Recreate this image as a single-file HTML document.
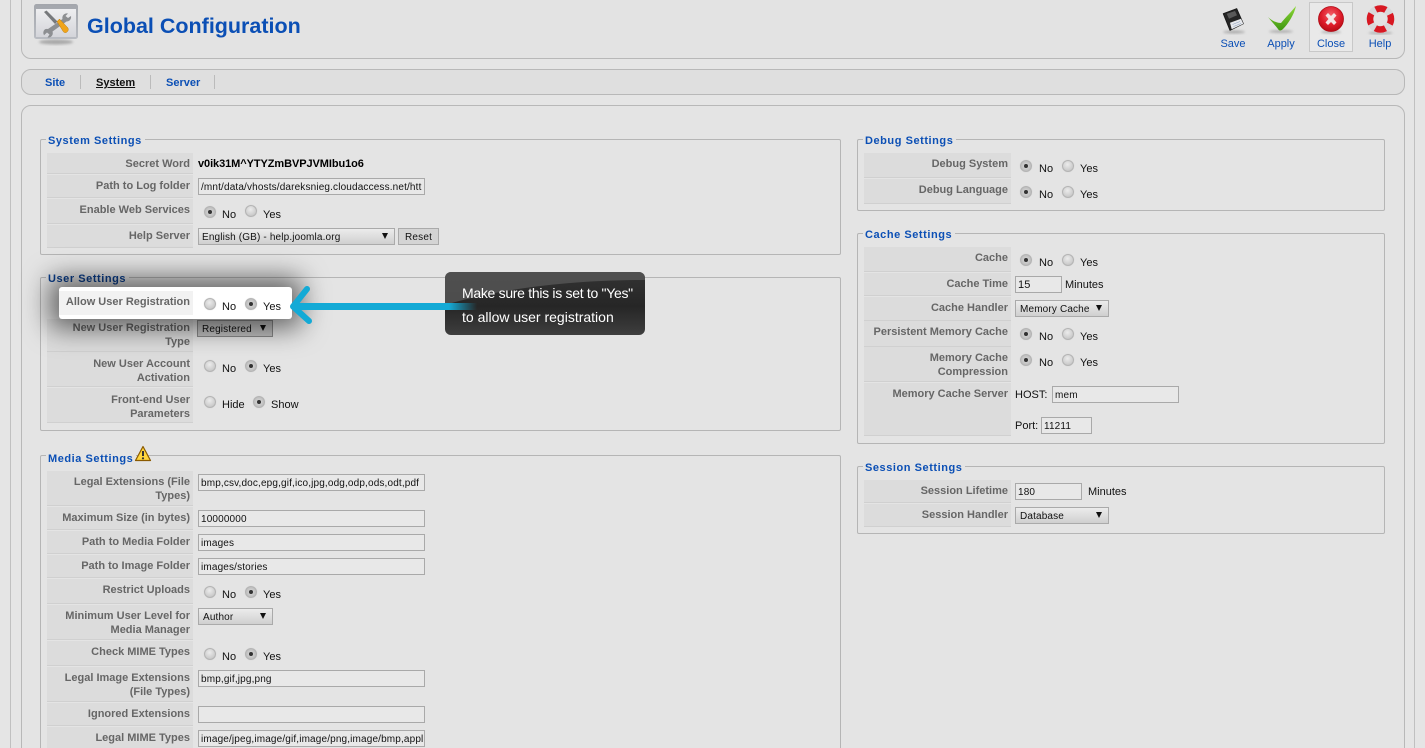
<!DOCTYPE html>
<html><head><meta charset="utf-8"><title>Global Configuration</title>
<style>
html,body{margin:0;padding:0;width:1425px;height:748px;overflow:hidden;background:#e5e5e5}
body{position:relative;font:11px/14px "Liberation Sans",Arial,sans-serif;color:#111}
div,span,svg{position:absolute;box-sizing:border-box}
.box{border:1px solid #b8b8b8;border-radius:10px;background:#e3e3e3}
.fs{border:1px solid #b5b5b5;border-radius:2px}
.lg{font-weight:bold;font-size:11px;letter-spacing:.55px;color:#0b4fb5;background:#e4e4e4;padding:0 3px 0 2px;white-space:nowrap;height:14px;margin-top:1px}
.c{background:#dcdcdc;border-top:1px solid transparent;border-bottom:1px solid #d0d0d0;color:#666;font-weight:bold;text-align:right;padding:3px 3px 0 0}
.t{white-space:nowrap;height:14px;margin-top:1px}
.r{width:12px;height:12px;border-radius:50%;border:1px solid #b4b4b4;background:radial-gradient(circle at 45% 35%,#ececec,#bcbcbc);box-shadow:0 0 1px #ccc}
.r.k{background:radial-gradient(circle at 50% 50%,#ddd,#b0b0b0)}
.r.k::after{content:"";position:absolute;left:3px;top:3px;width:4px;height:4px;border-radius:50%;background:#333}
.i{border:1px solid #a9a9a9;background:#e8e8e8;height:17px;font-size:10px;line-height:15px;padding:1px 0 0 2px;overflow:hidden;white-space:nowrap;letter-spacing:.15px}
.s{border:1px solid #aaa;background:linear-gradient(#ececec,#cfcfcf);height:17px;font-size:10px;line-height:15px;padding:1px 0 0 4px;white-space:nowrap;letter-spacing:.15px}
.s::after{content:"";position:absolute;right:6px;top:4px;border:3.5px solid transparent;border-top:6px solid #111;border-bottom:0}
.tb{color:#0b4fb5;text-align:center;width:50px;margin-top:1px}
.tab{font-weight:bold;color:#0b4fb5;white-space:nowrap;margin-top:1px}
.sp{width:1px;height:14px;background:#bbb;top:75px}
</style></head><body>
<div style="left:10px;top:-5px;width:1405px;height:760px;border:1px solid #c0c0c0"></div>

<div class="box" style="left:21px;top:-12px;width:1384px;height:71px"></div>
<div class="box" style="left:21px;top:69px;width:1384px;height:26px;background:#dfdfdf"></div>
<div class="box" style="left:21px;top:105px;width:1384px;height:660px;background:#e4e4e4"></div>

<svg width="0" height="0" style="left:0;top:0">
<defs>
<linearGradient id="g1" x1="0" y1="0" x2="0" y2="1"><stop offset="0" stop-color="#eeeef0"/><stop offset="1" stop-color="#d4d5da"/></linearGradient>
<linearGradient id="fr" x1="0" y1="0" x2="0" y2="1"><stop offset="0" stop-color="#a3a6ac"/><stop offset="1" stop-color="#b9bcc2"/></linearGradient>
<linearGradient id="gc" x1="0" y1="0" x2="0" y2="1"><stop offset="0" stop-color="#8ed838"/><stop offset="1" stop-color="#3d9610"/></linearGradient>
<radialGradient id="rg" cx=".5" cy=".35" r=".65"><stop offset="0" stop-color="#f4606a"/><stop offset=".6" stop-color="#de1c2a"/><stop offset="1" stop-color="#b80a14"/></radialGradient>
<filter id="bl" x="-30%" y="-100%" width="160%" height="300%"><feGaussianBlur stdDeviation="1.2"/></filter>
</defs></svg>

<!-- header icon -->
<svg style="left:32px;top:2px" width="48" height="44" viewBox="0 0 48 44">
<ellipse cx="24" cy="40" rx="17" ry="2.500" fill="#a8a8a8" filter="url(#bl)"/>
<rect x="2" y="2" width="44" height="35" rx="2.500" fill="url(#fr)"/>
<rect x="4" y="7" width="40" height="28" fill="url(#g1)"/>
<path d="M36 11.500a4.500 4.500 0 0 0-5.500 5.500L16 27a4.500 4.500 0 0 0-3 .2 4.500 4.500 0 0 0-1 6l3-2.700 2.500 2-2 3a4.500 4.500 0 0 0 5-6l14-10a4.500 4.500 0 0 0 4.500-5.500l-3 2-2.500-2z" fill="#8d8f92"/>
<path d="M12 10l2.500-1.500 11 11-2.500 2.500z" fill="#77797c"/>
<path d="M25 19.500l2.500-2.500 8 8.500c1.200 1.400 1 3-.2 4.200s-2.800 1.300-4-.1z" fill="#f0a41a" stroke="#bd7c0a" stroke-width=".5"/>
</svg>
<div style="left:87px;top:12px;font-size:21.5px;line-height:28px;font-weight:bold;color:#0b4fb5;white-space:nowrap">Global Configuration</div>

<!-- toolbar -->
<div style="left:1309px;top:2px;width:44px;height:50px;background:#e9e9e9;border:1px solid #c8c8c8"></div>
<svg style="left:1219px;top:7px" width="28" height="28" viewBox="0 0 28 28">
<ellipse cx="15" cy="25" rx="11" ry="1.500" fill="#aaa" filter="url(#bl)"/>
<path d="M4.300 6.700L17.700 1.700 24.300 16.700 11 23.300z" fill="#262626" stroke="#1a1a1a" stroke-width="1" stroke-linejoin="round"/>
<path d="M7.700 6.700L16 4l2 4.300-8 3.400z" fill="#5a5a5a"/>
<path d="M11 15.700L22 11.700l2.300 5L12.700 22.300z" fill="#e6e8ec"/>
<path d="M13.500 17.500l7.500-3M14.500 19.500l7.500-3" stroke="#8fa2c0" stroke-width=".6"/>
</svg>
<svg style="left:1266px;top:5px" width="32" height="30" viewBox="0 0 32 30">
<ellipse cx="15" cy="26.500" rx="12" ry="1.300" fill="#aaa" filter="url(#bl)"/>
<path d="M2 12C6 16 11 18 15 18 20 12 26 6 30 1 28 10 22 19 17 24 15 26 13 26 12 24 9 20 5 16 2 12z" fill="url(#gc)"/>
</svg>
<svg style="left:1317px;top:5px" width="28" height="30" viewBox="0 0 28 30">
<ellipse cx="14" cy="27" rx="10" ry="1.300" fill="#aaa" filter="url(#bl)"/>
<circle cx="14" cy="14" r="12.500" fill="url(#rg)" stroke="#b00c16" stroke-width=".8"/>
<path d="M8.500 10.500l2.500-2.500 3 3 3-3 2.500 2.500-3 3.500 3 3.500-2.500 2.500-3-3-3 3-2.500-2.500 3-3.500z" fill="#f4e4e4"/>
</svg>
<svg style="left:1365px;top:5px" width="31" height="30" viewBox="0 0 31 30">
<ellipse cx="15.500" cy="28" rx="12" ry="1.200" fill="#aaa" filter="url(#bl)"/>
<circle cx="15.500" cy="14" r="10.500" fill="#e3e3e3" stroke="#d8d8da" stroke-width="7"/>
<circle cx="15.500" cy="14" r="10.500" fill="none" stroke="#d81822" stroke-width="6.500" stroke-dasharray="10.500 6" stroke-dashoffset="5.250"/>
</svg>
<div class="tb" style="left:1208px;top:36px">Save</div>
<div class="tb" style="left:1256px;top:36px">Apply</div>
<div class="tb" style="left:1306px;top:36px">Close</div>
<div class="tb" style="left:1355px;top:36px">Help</div>

<!-- tabs -->
<div class="tab" style="left:45px;top:75px">Site</div>
<div class="sp" style="left:80px"></div>
<div class="tab" style="left:96px;top:75px;color:#111;text-decoration:underline">System</div>
<div class="sp" style="left:150px"></div>
<div class="tab" style="left:166px;top:75px">Server</div>
<div class="sp" style="left:214px"></div>

<!-- System settings -->
<div class="fs" style="left:40px;top:139px;width:801px;height:116px"></div>
<div class="lg" style="left:46px;top:133px">System Settings</div>
<div class="c" style="left:47px;top:153px;width:146px;height:21px">Secret Word</div>
<div class="c" style="left:47px;top:175px;width:146px;height:23px">Path to Log folder</div>
<div class="c" style="left:47px;top:199px;width:146px;height:25px">Enable Web Services</div>
<div class="c" style="left:47px;top:225px;width:146px;height:23px">Help Server</div>
<div class="t" style="left:198px;top:156px;font-weight:bold;color:#000;letter-spacing:-.08px">v0ik31M^YTYZmBVPJVMIbu1o6</div>
<div class="i" style="left:198px;top:178px;width:227px">/mnt/data/vhosts/dareksnieg.cloudaccess.net/htt</div>
<span class="r k" style="left:204px;top:206px"></span><div class="t" style="left:222px;top:207px">No</div>
<span class="r" style="left:245px;top:205px"></span><div class="t" style="left:263px;top:207px">Yes</div>
<div class="s" style="left:198px;top:228px;width:197px;padding-left:3px">English (GB) - help.joomla.org</div>
<div style="left:398px;top:228px;width:41px;height:17px;border:1px solid #aaa;background:#d4d4d4;font-size:10px;line-height:15px;padding-top:1px;text-align:center;letter-spacing:.2px">Reset</div>

<!-- User settings -->
<div class="fs" style="left:40px;top:277px;width:801px;height:154px"></div>
<div class="lg" style="left:46px;top:271px;color:#0b3f8e">User Settings</div>
<div class="c" style="left:47px;top:319px;width:146px;height:33px;padding-top:1px">New User Registration<br>Type</div>
<div class="c" style="left:47px;top:352px;width:146px;height:35px;padding-top:4px">New User Account<br>Activation</div>
<div class="c" style="left:47px;top:388px;width:146px;height:35px;padding-top:4px">Front-end User<br>Parameters</div>
<div class="s" style="left:197px;top:320px;width:76px;background:#c2c2c2;border-color:#8a8a8a">Registered</div>
<span class="r" style="left:204px;top:360px"></span><div class="t" style="left:222px;top:361px">No</div>
<span class="r k" style="left:245px;top:360px"></span><div class="t" style="left:263px;top:361px">Yes</div>
<span class="r" style="left:204px;top:396px"></span><div class="t" style="left:222px;top:397px">Hide</div>
<span class="r k" style="left:253px;top:396px"></span><div class="t" style="left:271px;top:397px">Show</div>

<!-- highlight -->
<div style="left:59px;top:287px;width:233px;height:32px;background:#fff;border-radius:3px;box-shadow:0 0 26px 10px rgba(0,0,0,.55)"></div>
<div class="c" style="left:59px;top:291px;width:134px;height:24px;background:#f2f2f2;border-bottom:0;padding-top:3px">Allow User Registration</div>
<span class="r" style="left:204px;top:298px"></span><div class="t" style="left:222px;top:299px">No</div>
<span class="r k" style="left:245px;top:298px"></span><div class="t" style="left:263px;top:299px">Yes</div>

<!-- tooltip -->
<div style="left:445px;top:272px;width:200px;height:63px;border-radius:6px;background:linear-gradient(#333,#262626 55%,#3e3e3e 100%)"></div>
<svg style="left:445px;top:272px" width="200" height="63" viewBox="0 0 200 63">
<path d="M6 0H194a6 6 0 0 1 6 6v2C120 8 50 18 0 33V6a6 6 0 0 1 6-6z" fill="#5a5a5a" opacity=".75"/>
</svg>
<!-- arrow -->
<svg style="left:285px;top:282px" width="195" height="46" viewBox="0 0 195 46">
<defs><linearGradient id="ag" gradientUnits="userSpaceOnUse" x1="5" y1="0" x2="192" y2="0"><stop offset="0" stop-color="#13aad6"/><stop offset=".85" stop-color="#13aad6"/><stop offset="1" stop-color="#13aad6" stop-opacity="0"/></linearGradient></defs>
<rect x="8" y="21" width="184" height="7" fill="url(#ag)"/>
<path d="M22 7L8 24.500 24 39" stroke="#13aad6" stroke-width="6" fill="none" stroke-linecap="round" stroke-linejoin="round"/>
</svg>
<div class="t" style="left:462px;top:284px;color:#fff;font-size:14px;line-height:16px;height:16px;letter-spacing:-.3px">Make sure this is set to "Yes"</div>
<div class="t" style="left:462px;top:308px;color:#fff;font-size:14px;line-height:16px;height:16px;letter-spacing:0">to allow user registration</div>

<!-- Media settings -->
<div class="fs" style="left:40px;top:455px;width:801px;height:310px"></div>
<div class="lg" style="left:46px;top:451px">Media Settings</div>
<svg style="left:134px;top:445px" width="18" height="18" viewBox="0 0 18 18">
<path d="M9 1.500L16.500 15.500H1.500z" fill="#ffd53c" stroke="#8a5a00" stroke-width="1.200" stroke-linejoin="round"/>
<path d="M9 6v5" stroke="#333" stroke-width="2"/><circle cx="9" cy="13.300" r="1.100" fill="#333"/>
</svg>
<div class="c" style="left:47px;top:471px;width:146px;height:35px;padding-top:3px">Legal Extensions (File<br>Types)</div>
<div class="c" style="left:47px;top:507px;width:146px;height:23px">Maximum Size (in bytes)</div>
<div class="c" style="left:47px;top:531px;width:146px;height:23px">Path to Media Folder</div>
<div class="c" style="left:47px;top:555px;width:146px;height:23px">Path to Image Folder</div>
<div class="c" style="left:47px;top:579px;width:146px;height:25px">Restrict Uploads</div>
<div class="c" style="left:47px;top:605px;width:146px;height:35px">Minimum User Level for<br>Media Manager</div>
<div class="c" style="left:47px;top:641px;width:146px;height:25px">Check MIME Types</div>
<div class="c" style="left:47px;top:667px;width:146px;height:35px">Legal Image Extensions<br>(File Types)</div>
<div class="c" style="left:47px;top:703px;width:146px;height:23px">Ignored Extensions</div>
<div class="c" style="left:47px;top:727px;width:146px;height:23px">Legal MIME Types</div>
<div class="i" style="left:198px;top:474px;width:227px">bmp,csv,doc,epg,gif,ico,jpg,odg,odp,ods,odt,pdf</div>
<div class="i" style="left:198px;top:510px;width:227px">10000000</div>
<div class="i" style="left:198px;top:534px;width:227px">images</div>
<div class="i" style="left:198px;top:558px;width:227px">images/stories</div>
<span class="r" style="left:204px;top:586px"></span><div class="t" style="left:222px;top:587px">No</div>
<span class="r k" style="left:245px;top:586px"></span><div class="t" style="left:263px;top:587px">Yes</div>
<div class="s" style="left:198px;top:608px;width:75px">Author</div>
<span class="r" style="left:204px;top:648px"></span><div class="t" style="left:222px;top:649px">No</div>
<span class="r k" style="left:245px;top:648px"></span><div class="t" style="left:263px;top:649px">Yes</div>
<div class="i" style="left:198px;top:670px;width:227px">bmp,gif,jpg,png</div>
<div class="i" style="left:198px;top:706px;width:227px"></div>
<div class="i" style="left:198px;top:730px;width:227px">image/jpeg,image/gif,image/png,image/bmp,appl</div>

<!-- Debug settings -->
<div class="fs" style="left:857px;top:139px;width:528px;height:72px"></div>
<div class="lg" style="left:863px;top:133px">Debug Settings</div>
<div class="c" style="left:864px;top:153px;width:147px;height:25px">Debug System</div>
<div class="c" style="left:864px;top:179px;width:147px;height:25px">Debug Language</div>
<span class="r k" style="left:1020px;top:160px"></span><div class="t" style="left:1039px;top:161px">No</div>
<span class="r" style="left:1062px;top:160px"></span><div class="t" style="left:1080px;top:161px">Yes</div>
<span class="r k" style="left:1020px;top:186px"></span><div class="t" style="left:1039px;top:187px">No</div>
<span class="r" style="left:1062px;top:186px"></span><div class="t" style="left:1080px;top:187px">Yes</div>

<!-- Cache settings -->
<div class="fs" style="left:857px;top:233px;width:528px;height:211px"></div>
<div class="lg" style="left:863px;top:227px">Cache Settings</div>
<div class="c" style="left:864px;top:247px;width:147px;height:25px">Cache</div>
<div class="c" style="left:864px;top:273px;width:147px;height:23px">Cache Time</div>
<div class="c" style="left:864px;top:297px;width:147px;height:24px">Cache Handler</div>
<div class="c" style="left:864px;top:321px;width:147px;height:26px">Persistent Memory Cache</div>
<div class="c" style="left:864px;top:347px;width:147px;height:35px">Memory Cache<br>Compression</div>
<div class="c" style="left:864px;top:383px;width:147px;height:53px">Memory Cache Server</div>
<span class="r k" style="left:1020px;top:254px"></span><div class="t" style="left:1039px;top:255px">No</div>
<span class="r" style="left:1062px;top:254px"></span><div class="t" style="left:1080px;top:255px">Yes</div>
<div class="i" style="left:1015px;top:276px;width:47px;font-size:11px">15</div>
<div class="t" style="left:1065px;top:277px">Minutes</div>
<div class="s" style="left:1015px;top:300px;width:94px">Memory Cache</div>
<span class="r k" style="left:1020px;top:328px"></span><div class="t" style="left:1039px;top:329px">No</div>
<span class="r" style="left:1062px;top:328px"></span><div class="t" style="left:1080px;top:329px">Yes</div>
<span class="r k" style="left:1020px;top:354px"></span><div class="t" style="left:1039px;top:355px">No</div>
<span class="r" style="left:1062px;top:354px"></span><div class="t" style="left:1080px;top:355px">Yes</div>
<div class="t" style="left:1015px;top:387px">HOST:</div>
<div class="i" style="left:1052px;top:386px;width:127px">mem</div>
<div class="t" style="left:1015px;top:418px">Port:</div>
<div class="i" style="left:1041px;top:417px;width:51px">11211</div>

<!-- Session settings -->
<div class="fs" style="left:857px;top:466px;width:528px;height:68px"></div>
<div class="lg" style="left:863px;top:460px">Session Settings</div>
<div class="c" style="left:864px;top:480px;width:147px;height:23px">Session Lifetime</div>
<div class="c" style="left:864px;top:504px;width:147px;height:23px">Session Handler</div>
<div class="i" style="left:1015px;top:483px;width:67px">180</div>
<div class="t" style="left:1088px;top:484px">Minutes</div>
<div class="s" style="left:1015px;top:507px;width:94px">Database</div>
</body></html>
